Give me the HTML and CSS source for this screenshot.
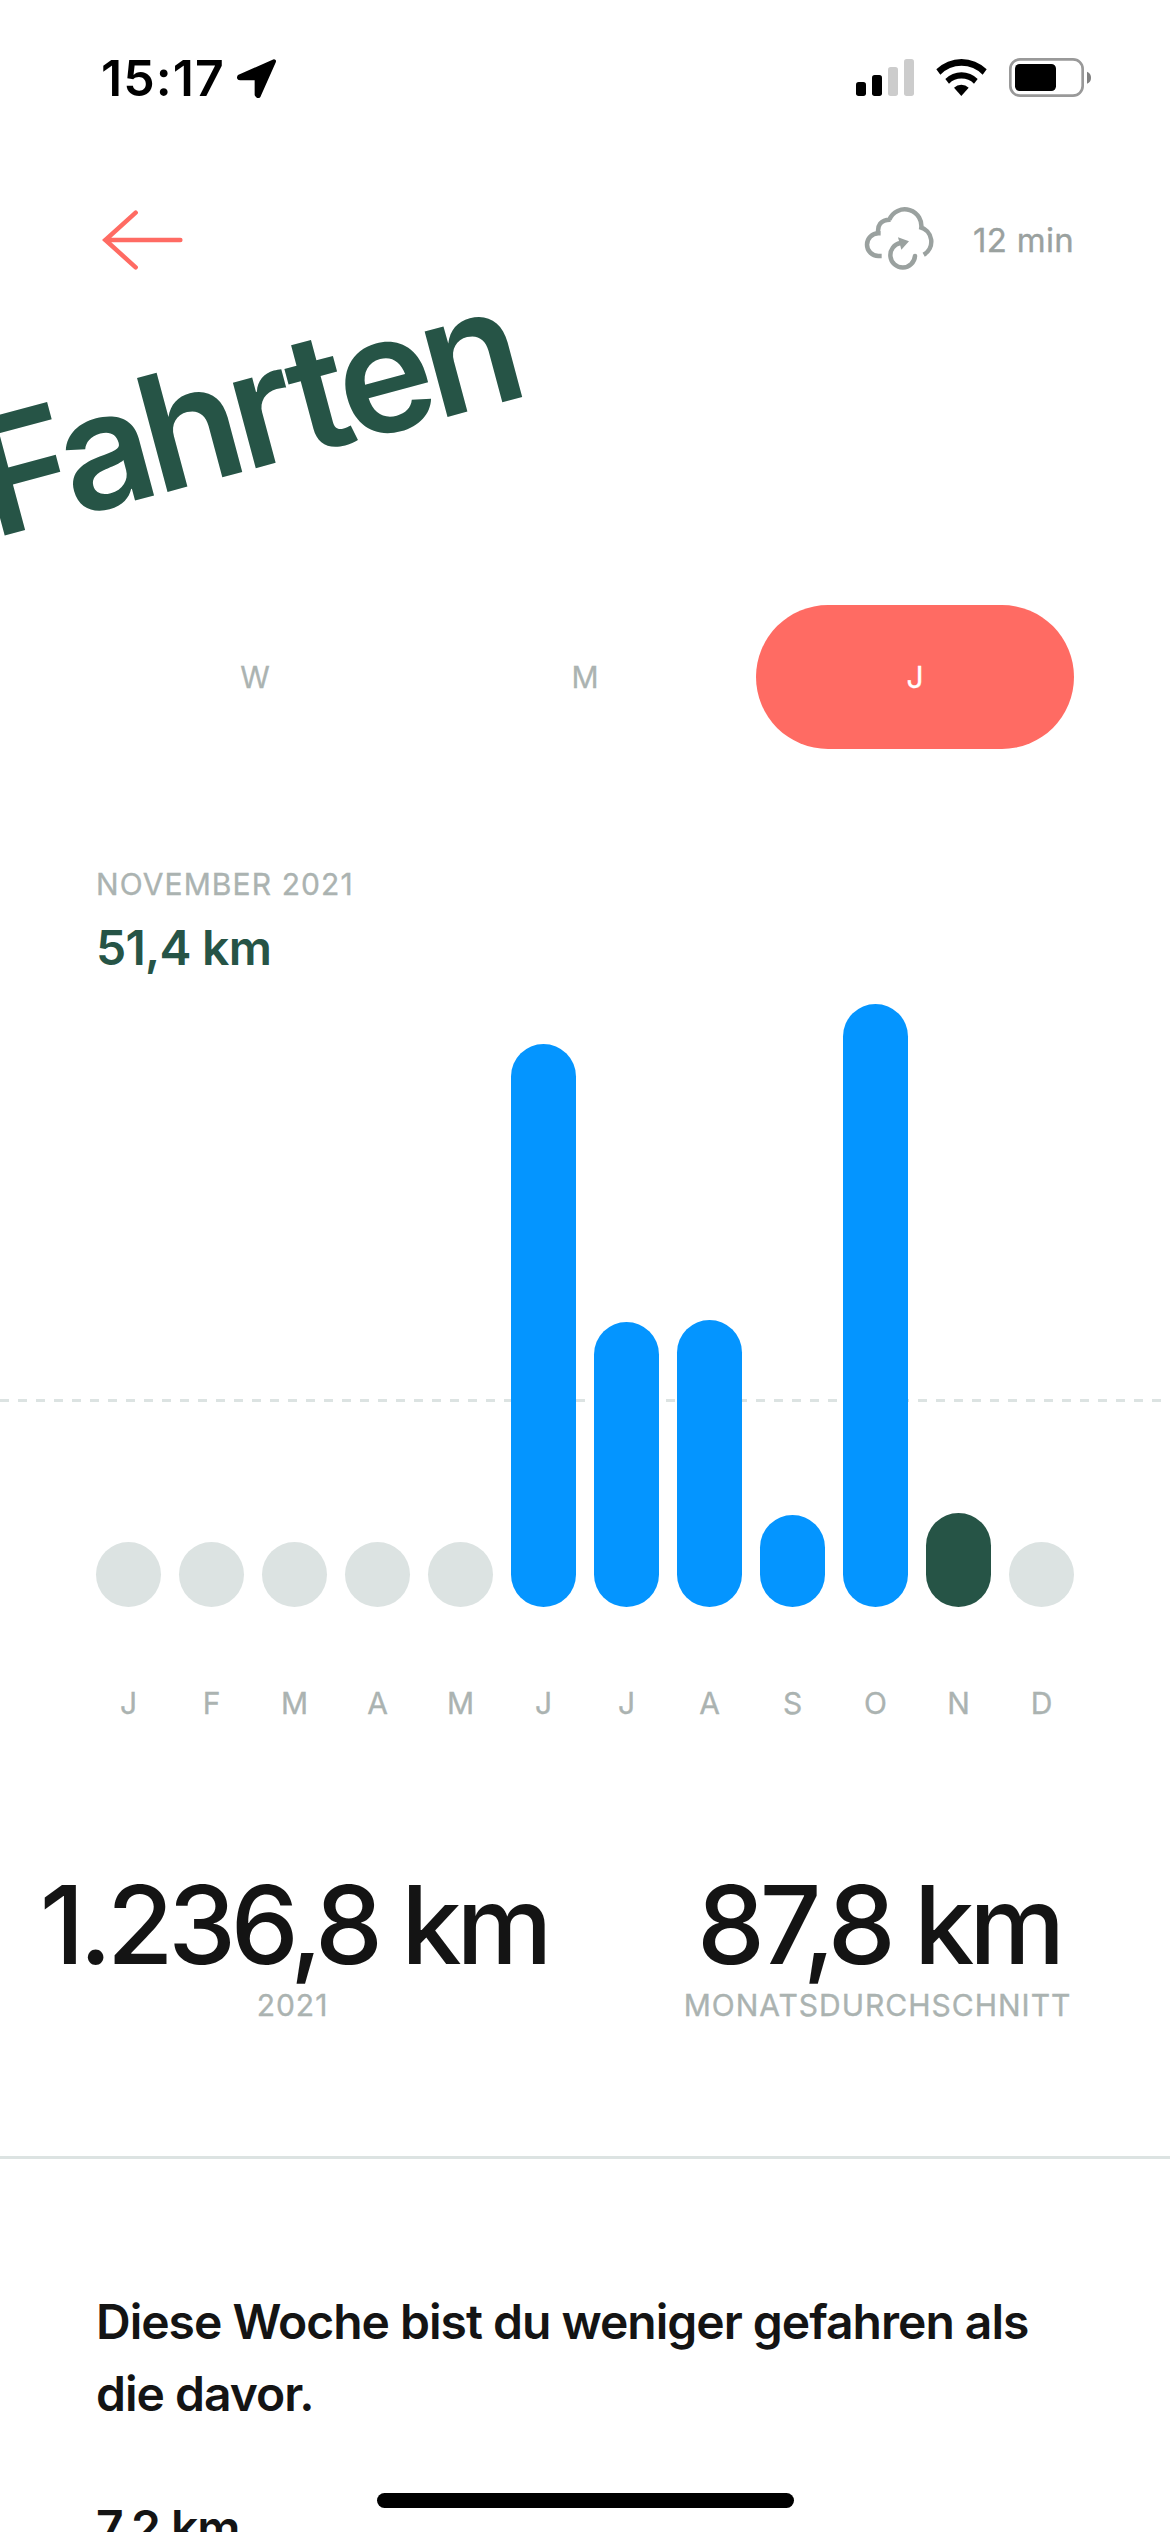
FILE: index.html
```html
<!DOCTYPE html>
<html lang="de">
<head>
<meta charset="utf-8">
<title>Fahrten</title>
<link rel="stylesheet" href="styles.css">
</head>
<body>
<div class="screen">
  <div class="status">
    <div class="status-left">
      <span class="time">15:17</span>
      <svg class="location" viewBox="471 56 118 118"><path d="M582 63 L478 109 Q475 114 481 114 H530 V163 Q534 171 537 165 Z" fill="#000" stroke="#000" stroke-width="12" stroke-linejoin="round"/></svg>
    </div>
    <div class="status-right">
      <svg class="signal" viewBox="0 0 174 111">
        <rect x="0" y="69" width="30" height="42" rx="8"/>
        <rect x="48" y="48" width="30" height="63" rx="8"/>
        <rect class="off" x="96" y="24" width="30" height="87" rx="8"/>
        <rect class="off" x="144" y="0" width="30" height="111" rx="8"/>
      </svg>
      <svg class="wifi" viewBox="318 57 153 111">
        <path d="M319 88 A108 108 0 0 1 470 88 L458 104 A88 88 0 0 0 331 104 Z"/>
        <path d="M346 117 A68 68 0 0 1 443 117 L432 131 A54 54 0 0 0 357 131 Z"/>
        <path d="M372 143 A32 32 0 0 1 416 143 L394 168 Z"/>
      </svg>
      <svg class="battery" viewBox="537 54 246 117">
        <rect x="541" y="58" width="217" height="109" rx="29" fill="none" stroke="#999" stroke-width="8"/>
        <rect x="555" y="72" width="123" height="81" rx="14"/>
        <path d="M771 95 Q783 100 783 113 Q783 126 771 131 Z" fill="#808080"/>
      </svg>
    </div>
  </div>

  <div class="nav">
    <svg class="back" viewBox="66 60 242 180"><path d="M167 68 L76 150 L167 232 M76 150 H301" fill="none" stroke="#ff6b63" stroke-width="13.5" stroke-linecap="round" stroke-linejoin="miter"/></svg>
    <div class="sync">
      <svg class="cloud" viewBox="69 47 213 194" fill="none" stroke="#9aa19f" stroke-width="13.5">
        <path d="M122 197 H112 A34 34 0 0 1 112 129 H119 M113 134 C106 106 120 87 149 88 M145 88 A50 50 0 0 1 240 118 M236 110 A45 45 0 0 1 248 193"/>
        <path d="M222 197 A37 37 0 1 1 178 158" stroke-linecap="round"/>
        <path d="M171 141 L204 153 L181 178 Z" fill="#9aa19f" stroke="none"/>
      </svg>
      <span class="sync-time">12 min</span>
    </div>
  </div>

  <h1 class="title">Fah<span class="loose">r</span>ten</h1>

  <div class="tabs">
    <div class="tab">W</div>
    <div class="tab">M</div>
    <div class="tab active">J</div>
  </div>

  <div class="summary">
    <div class="label">NOVEMBER 2021</div>
    <div class="value">51,4 km</div>
  </div>

  <div class="chart">
    <div class="average"></div>
    <div class="bar empty"></div>
    <div class="bar empty"></div>
    <div class="bar empty"></div>
    <div class="bar empty"></div>
    <div class="bar empty"></div>
    <div class="bar" style="height:563px"></div>
    <div class="bar" style="height:285px"></div>
    <div class="bar" style="height:287px"></div>
    <div class="bar" style="height:92px"></div>
    <div class="bar" style="height:603px"></div>
    <div class="bar selected" style="height:94px"></div>
    <div class="bar empty"></div>
  </div>
  <div class="months">
    <span>J</span><span>F</span><span>M</span><span>A</span><span>M</span><span>J</span><span>J</span><span>A</span><span>S</span><span>O</span><span>N</span><span>D</span>
  </div>

  <div class="stats">
    <div class="stat"><div class="number">1.236,8 km</div><div class="label">2021</div></div>
    <div class="stat"><div class="number">87,8 km</div><div class="label">MONATSDURCHSCHNITT</div></div>
  </div>

  <div class="insight">
    <p>Diese Woche bist du weniger gefahren als die davor.</p>
    <p class="distance">7,2 km</p>
  </div>
  <div class="home-indicator"></div>
</div>
</body>
</html>
```

FILE: styles.css
```css
* { box-sizing: border-box; }
body { margin: 0; background: #fff; font-family: Inter, "Liberation Sans", sans-serif; color: #141414; }
svg { display: block; }
.screen { position: relative; width: 1170px; height: 2532px; overflow: hidden; background: #fff; }

.status { display: flex; justify-content: space-between; height: 155px; padding: 48px 79px 0 101px; }
.status-left { display: flex; gap: 12px; height: 60px; }
.time { font-size: 50px; line-height: 60px; font-weight: 600; letter-spacing: 1.1px; color: #000; }
.location { width: 39.3px; height: 39.3px; margin-top: 10.5px; }
.status-right { display: flex; height: 60px; }
.signal { width: 58px; height: 37px; margin-top: 11px; }
.signal .off { fill: #ccc; }
.wifi { width: 51px; height: 37px; margin: 11px 0 0 22px; }
.battery { width: 82px; height: 39px; margin: 10px 0 0 22px; }

.nav { display: flex; justify-content: space-between; align-items: center; height: 90px; margin-top: 40px; padding: 0 96px 0 102px; }
.back { width: 80.7px; height: 60px; }
.sync { display: flex; align-items: center; gap: 38px; }
.cloud { width: 71px; height: 64.7px; margin-top: -4px; }
.sync-time { font-size: 33px; line-height: 40px; font-weight: 400; letter-spacing: 0.3px; color: #9aa19f; -webkit-text-stroke: 0.35px #9aa19f; }

.title { width: 610px; margin: 111px 0 0 -7px; font-size: 162px; line-height: 162px; font-weight: 600; letter-spacing: -7.85px; color: #265446; transform: rotate(-15deg); transform-origin: 10px 140px; white-space: nowrap; }
.title .loose { letter-spacing: -1.6px; }

.tabs { display: grid; grid-template-columns: repeat(3, 1fr); gap: 12px; margin: 47px 96px 0; height: 144px; }
.tab { display: flex; align-items: center; justify-content: center; border-radius: 72px; font-size: 30px; font-weight: 400; color: #abb3b1; -webkit-text-stroke: 0.3px currentColor; }
.tab.active { background: #ff6b63; color: #fff; }

.label { font-size: 30px; line-height: 36px; font-weight: 400; letter-spacing: 1.1px; color: #abb3b1; -webkit-text-stroke: 0.35px #abb3b1; }
.summary { margin: 117px 96px 0; }
.value { margin-top: 16px; font-size: 48px; line-height: 59px; font-weight: 600; letter-spacing: -0.75px; color: #265446; }

.chart { position: relative; display: flex; align-items: flex-end; gap: 18px; height: 603px; margin-top: 27px; padding: 0 96px; }
.average { position: absolute; left: 0; top: 395px; width: 1170px; height: 3px; background: repeating-linear-gradient(90deg, #dce3e2 0 9px, transparent 9px 18px); }
.bar { position: relative; width: 65px; border-radius: 32.5px; background: #0495ff; }
.bar.empty { height: 65px; background: #dce3e2; }
.bar.selected { background: #265446; }
.months { display: grid; grid-template-columns: repeat(12, 65px); gap: 18px; margin: 78px 96px 0; font-size: 30px; line-height: 36px; font-weight: 400; text-align: center; color: #abb3b1; -webkit-text-stroke: 0.35px #abb3b1; }

.stats { display: grid; grid-template-columns: 1fr 1fr; height: 294px; margin-top: 144px; text-align: center; border-bottom: 3px solid #dce3e2; }
.stats .label { letter-spacing: 1px; }
.number { margin-bottom: 2px; padding-left: 2px; font-size: 108px; line-height: 120px; font-weight: 500; letter-spacing: -5.2px; white-space: nowrap; }

.insight { margin: 127px 96px 0; font-size: 48px; line-height: 72px; font-weight: 600; letter-spacing: -1px; }
.insight p { margin: 0; }
.insight .distance { margin-top: 62px; }
.home-indicator { position: absolute; left: 377px; bottom: 24px; width: 417px; height: 15px; border-radius: 8px; background: #000; }
```
